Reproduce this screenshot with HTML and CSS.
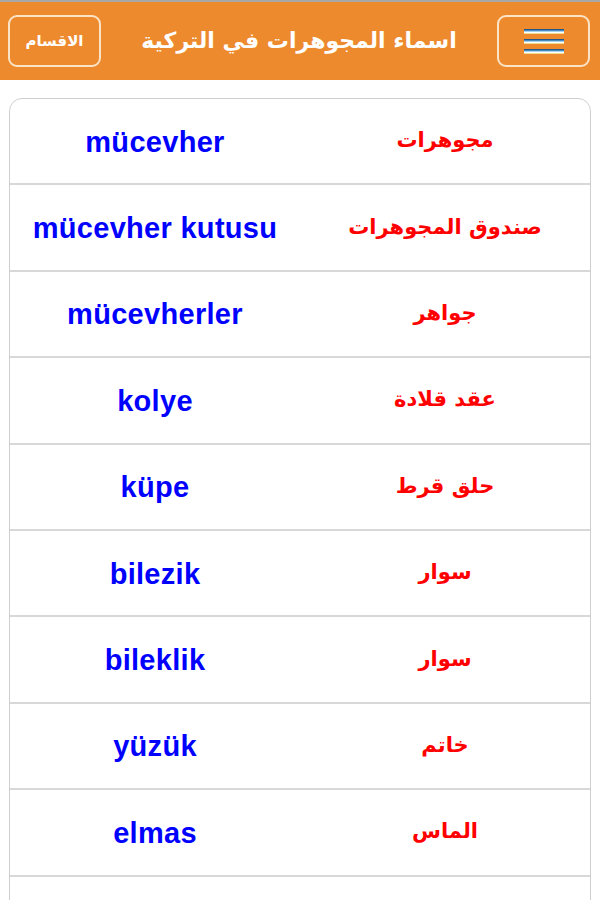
FILE: index.html
```html
<!DOCTYPE html>
<html lang="ar" dir="rtl">
<head>
<meta charset="utf-8">
<title>اسماء المجوهرات في التركية</title>
<link rel="stylesheet" href="styles.css">
</head>
<body>
<header class="topbar">
  <button class="btn menu-btn" aria-label="menu">
    <span class="bar"></span><span class="bar"></span><span class="bar"></span>
  </button>
  <h1 class="title">اسماء المجوهرات في التركية</h1>
  <button class="btn sections-btn">الاقسام</button>
</header>
<main class="card">
  <div class="row"><span class="ar">مجوهرات</span><span class="tr">mücevher</span></div>
  <div class="row"><span class="ar">صندوق المجوهرات</span><span class="tr">mücevher kutusu</span></div>
  <div class="row"><span class="ar">جواهر</span><span class="tr">mücevherler</span></div>
  <div class="row"><span class="ar">عقد قلادة</span><span class="tr">kolye</span></div>
  <div class="row"><span class="ar">حلق قرط</span><span class="tr">küpe</span></div>
  <div class="row"><span class="ar">سوار</span><span class="tr">bilezik</span></div>
  <div class="row"><span class="ar">سوار</span><span class="tr">bileklik</span></div>
  <div class="row"><span class="ar">خاتم</span><span class="tr">yüzük</span></div>
  <div class="row"><span class="ar">الماس</span><span class="tr">elmas</span></div>
  <div class="row"><span class="ar"></span><span class="tr"></span></div>
</main>
</body>
</html>
```
FILE: styles.css
```css
* { box-sizing: border-box; }
html, body { margin: 0; padding: 0; background: #fff; }
body {
  font-family: "Liberation Sans", "DejaVu Sans", sans-serif;
  overflow: hidden;
  height: 900px;
}
.topbar {
  height: 80px;
  border-top: 2px solid #a8a8a8;
  background: #ee8a2e;
  display: flex;
  align-items: center;
  justify-content: space-between;
  padding: 0 10px 0 8px;
}
.btn {
  width: 93px;
  height: 52px;
  margin-top: 0;
  border: 2px solid #fbe3c6;
  border-radius: 9px;
  background: transparent;
  display: flex;
  align-items: center;
  justify-content: center;
  padding: 0;
  color: #fff;
  font-family: "DejaVu Sans", sans-serif;
}
.menu-btn {
  flex-direction: column;
  gap: 5px;
}
.bar {
  display: block;
  width: 40px;
  height: 5px;
  background: linear-gradient(to bottom, #1a3f6a 0%, #2f78b4 25%, #bfe4fa 55%, #ffffff 70%, #e9c95a 100%);
}
.sections-btn {
  font-size: 15px;
  font-weight: bold;
}
.title {
  margin: -2px 0 0 0;
  color: #fff;
  font-family: "DejaVu Sans", sans-serif;
  font-size: 22px;
  font-weight: bold;
  flex: 1;
  text-align: center;
}
.card {
  margin: 18px 9px 0 9px;
  border: 1px solid #cfcfcf;
  border-radius: 13px;
  overflow: hidden;
}
.row {
  height: 86.4px;
  border-bottom: 2px solid #d8d8d8;
  display: grid;
  grid-template-columns: 1fr 1fr;
  align-items: center;
  text-align: center;
}
.ar {
  color: #ff0000;
  font-family: "DejaVu Sans", sans-serif;
  font-size: 21px;
  font-weight: bold;
  padding-bottom: 2px;
}
.tr {
  color: #0000ff;
  font-family: "Liberation Sans", Arial, sans-serif;
  font-weight: bold;
  font-size: 29px;
  letter-spacing: 0.3px;
  direction: ltr;
  padding-top: 2px;
}
```
